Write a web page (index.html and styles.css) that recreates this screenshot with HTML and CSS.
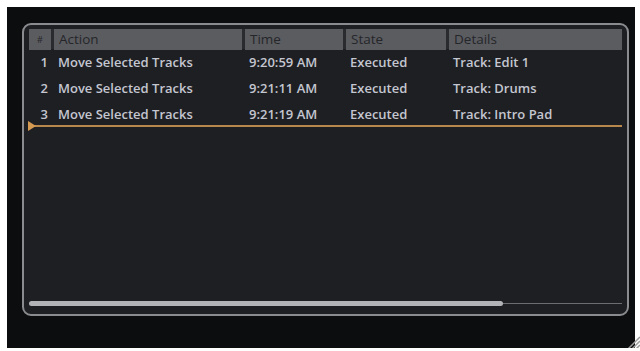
FILE: index.html
```html
<!DOCTYPE html>
<html lang="en">
  <head>
    <meta charset="UTF-8">
    <title>Edit History</title>
    <link rel="stylesheet" href="styles.css">
  </head>
  <body>
    <!-- Edit History window -->
    <div class="frame">
      <div class="panel">
        <div class="grid header">
          <div class="cell num">#</div>
          <div class="cell">Action</div>
          <div class="cell">Time</div>
          <div class="cell">State</div>
          <div class="cell">Details</div>
        </div>
        <div class="grid row">
          <div class="cell num">1</div>
          <div class="cell">Move Selected Tracks</div>
          <div class="cell">9:20:59 AM</div>
          <div class="cell">Executed</div>
          <div class="cell">Track: Edit 1</div>
        </div>
        <div class="grid row">
          <div class="cell num">2</div>
          <div class="cell">Move Selected Tracks</div>
          <div class="cell">9:21:11 AM</div>
          <div class="cell">Executed</div>
          <div class="cell">Track: Drums</div>
        </div>
        <div class="grid row">
          <div class="cell num">3</div>
          <div class="cell">Move Selected Tracks</div>
          <div class="cell">9:21:19 AM</div>
          <div class="cell">Executed</div>
          <div class="cell">Track: Intro Pad</div>
        </div>
        <div class="marker">
          <span class="arrow"></span>
          <span class="line"></span>
        </div>
        <div class="spacer"></div>
        <div class="scrollbar">
          <div class="thumb"></div>
        </div>
      </div>
      <svg class="grip" width="18" height="18" viewBox="0 0 18 18">
        <path d="M18 4 L4 18 M18 8 L8 18 M18 12 L12 18 M18 16 L16 18" stroke="#9a9a9a" stroke-width="1.5"/>
      </svg>
    </div>
  </body>
</html>
```

FILE: styles.css
```css
body {
  margin: 0;
  background: #ffffff;
  font-family: "Open Sans", "Liberation Sans", sans-serif;
}

.frame {
  position: relative;
  margin: 7px 0 0 7px;
  width: 628px;
  height: 341px;
  background: #0c0d0f;
  padding: 16px 0 0 15px;
  box-sizing: border-box;
}

.panel {
  width: 607px;
  height: 293px;
  box-sizing: border-box;
  border: 2px solid #8a8b8e;
  border-radius: 9px;
  background: #1e1f23;
  padding: 4px 5px 8px 5px;
  display: flex;
  flex-direction: column;
}

.grid {
  display: grid;
  grid-template-columns: 22px 188px 98px 100px 1fr;
  column-gap: 3px;
}

.header {
  height: 20px;
  background: #2a2b2e;
}

.header .cell {
  background: #5b5c60;
  color: #25262a;
  font-size: 13.5px;
  line-height: 21px;
  padding-left: 5px;
}

.header .num {
  font-size: 9px;
  padding-left: 0;
  text-align: center;
}

.row {
  height: 26px;
}

.row .cell {
  color: #c4c6d0;
  font-size: 13px;
  font-weight: 600;
  line-height: 27px;
  padding-left: 4px;
  white-space: nowrap;
}

.row .num {
  text-align: right;
  padding-left: 0;
  padding-right: 3px;
}

.marker {
  position: relative;
  height: 4px;
  margin-top: -3px;
  display: flex;
  align-items: center;
}

.marker .line {
  flex: 1;
  height: 2px;
  background: #b8874c;
}

.marker .arrow {
  position: absolute;
  left: -1px;
  top: -3px;
  width: 0;
  height: 0;
  border-top: 5px solid transparent;
  border-bottom: 5px solid transparent;
  border-left: 8px solid #d49a52;
}

.spacer {
  flex: 1;
}

.scrollbar {
  height: 5px;
  position: relative;
  display: flex;
  align-items: center;
}

.scrollbar::before {
  content: "";
  position: absolute;
  left: 0;
  right: 0;
  top: 2px;
  height: 1px;
  background: #6c6d70;
}

.thumb {
  position: relative;
  width: 474px;
  height: 5px;
  border-radius: 3px;
  background: #b2b3b6;
}

.grip {
  position: absolute;
  right: -5px;
  bottom: -3px;
}
```
